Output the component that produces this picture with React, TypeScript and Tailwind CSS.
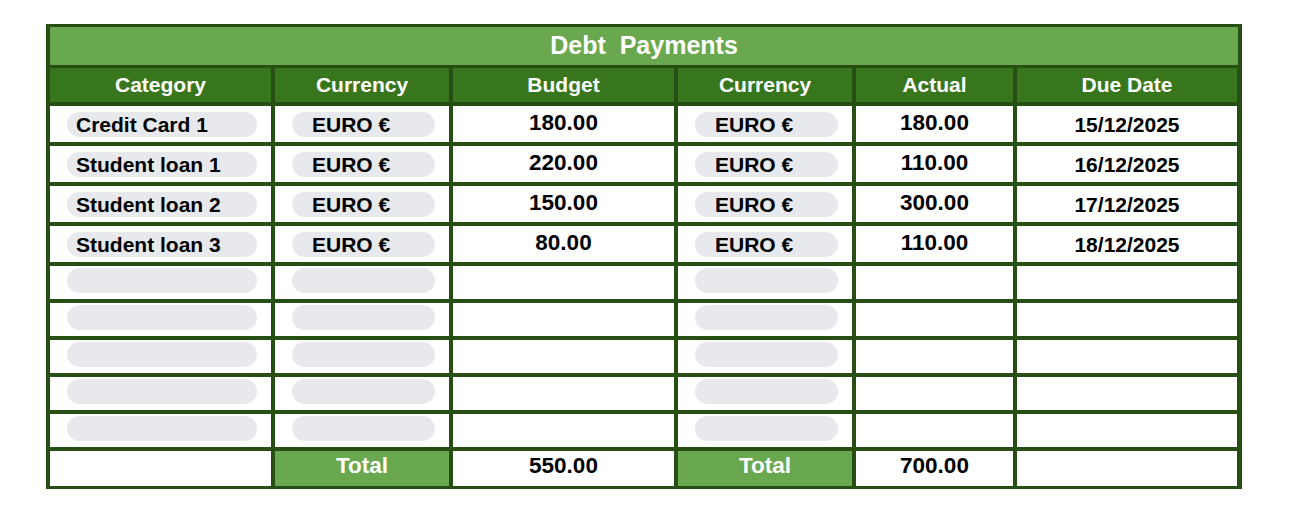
const cols = "grid grid-cols-[221px_174px_221px_174px_157px_220px] gap-[4px]";

const rows = [
  { cat: "Credit Card 1", budget: "180.00", actual: "180.00", due: "15/12/2025" },
  { cat: "Student loan 1", budget: "220.00", actual: "110.00", due: "16/12/2025" },
  { cat: "Student loan 2", budget: "150.00", actual: "300.00", due: "17/12/2025" },
  { cat: "Student loan 3", budget: "80.00", actual: "110.00", due: "18/12/2025" },
];

function Pill({ text, currency }: { text?: string; currency?: boolean }) {
  return (
    <div
      className={`mr-[14px] ml-[17px] flex h-[25px] flex-1 items-center rounded-full bg-[#e8e9ed] text-[21px] font-bold whitespace-nowrap text-black ${
        currency ? "pl-[20px]" : "pl-[9px]"
      }`}
    >
      {text}
    </div>
  );
}

export default function App() {
  return (
    <div className="min-h-[516px] bg-white pt-[24px] pl-[46px] font-['Liberation_Sans',Arial,sans-serif]">
      <div className="flex w-[1196px] flex-col gap-[4px] bg-[#274e13] px-[4px] pt-[3px] pb-[3px]">
        <div className="flex h-[38px] items-center justify-center bg-[#6aa84f] text-[25px] font-bold whitespace-pre text-white">
          Debt  Payments
        </div>
        <div className={`${cols} -mt-[1px]`}>
          {["Category", "Currency", "Budget", "Currency", "Actual", "Due Date"].map((h, i) => (
            <div key={i} className="flex h-[34px] items-center justify-center bg-[#38761d] text-[21px] font-bold text-white">
              {h}
            </div>
          ))}
        </div>
        {rows.map((r) => (
          <div key={r.cat} className={cols}>
            <div className="flex h-[36px] items-center bg-white pt-[1px]">
              <Pill text={r.cat} />
            </div>
            <div className="flex h-[36px] items-center bg-white pt-[1px]">
              <Pill text="EURO €" currency />
            </div>
            <div className="flex h-[36px] items-center justify-center bg-white pb-[3px] text-[22.5px] font-bold text-black">
              {r.budget}
            </div>
            <div className="flex h-[36px] items-center bg-white pt-[1px]">
              <Pill text="EURO €" currency />
            </div>
            <div className="flex h-[36px] items-center justify-center bg-white pb-[3px] text-[22.5px] font-bold text-black">
              {r.actual}
            </div>
            <div className="flex h-[36px] items-center justify-center bg-white pt-[2px] text-[21px] font-bold text-black">
              {r.due}
            </div>
          </div>
        ))}
        {[0, 1, 2, 3, 4].map((n) => (
          <div key={n} className={cols}>
            <div className="flex h-[33px] bg-white pt-[2px]">
              <Pill />
            </div>
            <div className="flex h-[33px] bg-white pt-[2px]">
              <Pill />
            </div>
            <div className="h-[33px] bg-white" />
            <div className="flex h-[33px] bg-white pt-[2px]">
              <Pill />
            </div>
            <div className="h-[33px] bg-white" />
            <div className="h-[33px] bg-white" />
          </div>
        ))}
        <div className={cols}>
          <div className="h-[35px] bg-white" />
          <div className="flex h-[35px] items-center justify-center bg-[#6aa84f] pb-[5px] text-[22.5px] font-bold text-white">
            Total
          </div>
          <div className="flex h-[35px] items-center justify-center bg-white pb-[5px] text-[22.5px] font-bold text-black">
            550.00
          </div>
          <div className="flex h-[35px] items-center justify-center bg-[#6aa84f] pb-[5px] text-[22.5px] font-bold text-white">
            Total
          </div>
          <div className="flex h-[35px] items-center justify-center bg-white pb-[5px] text-[22.5px] font-bold text-black">
            700.00
          </div>
          <div className="h-[35px] bg-white" />
        </div>
      </div>
    </div>
  );
}
